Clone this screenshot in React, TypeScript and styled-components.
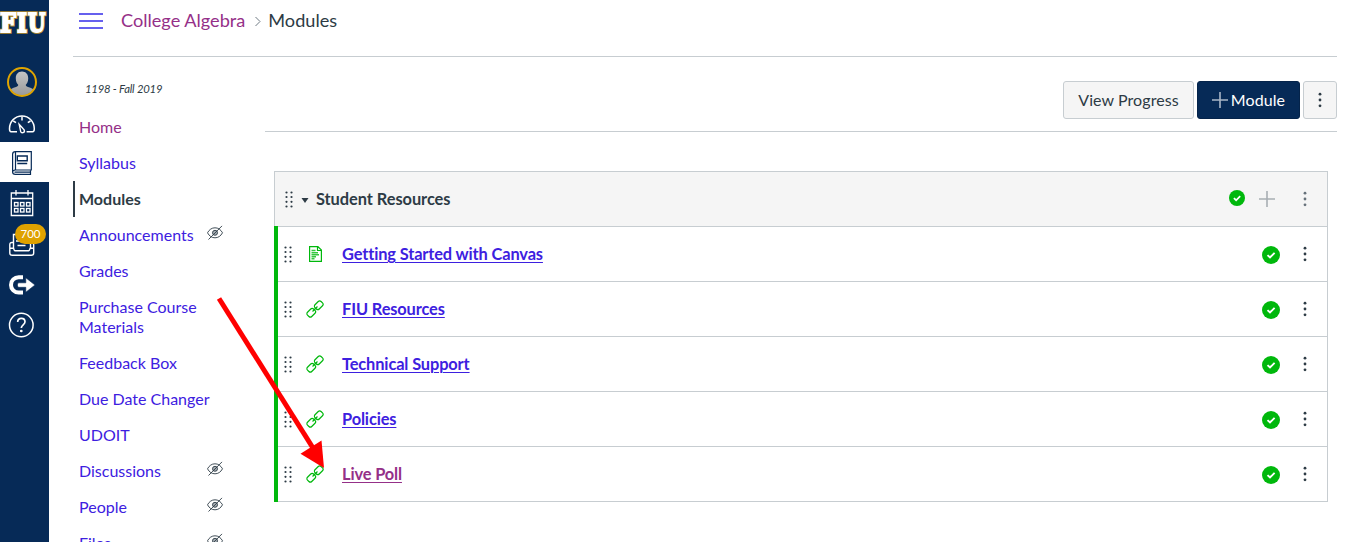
import React from "react";
import styled, { createGlobalStyle, css } from "styled-components";

const navy = "#062a57";
const ink = "#2d3b45";
const link = "#3d20df";
const visited = "#953088";
const line = "#c7cdd1";
const green = "#00b80c";

const Global = createGlobalStyle`
  * { box-sizing: border-box; }
  body { margin: 0; background: #fff; overflow: hidden; }
  svg { display: block; flex: none; }
`;

const Page = styled.div`
  position: relative;
  display: flex;
  width: 1353px;
  height: 542px;
  overflow: hidden;
  font-family: Lato, "Liberation Sans", sans-serif;
  font-size: 16px;
  line-height: 20px;
  color: ${ink};
`;

const Rail = styled.nav`
  flex: none;
  width: 49px;
  height: 542px;
  background: ${navy};
  overflow: hidden;
`;

const Brand = styled.div`
  height: 61px;
`;

const RailItem = styled.a<{ $h?: number; $active?: boolean; $drop?: number }>`
  position: relative;
  display: flex;
  align-items: center;
  padding-left: 7px;
  padding-top: ${(p) => p.$drop ?? 0}px;
  height: ${(p) => p.$h ?? 41}px;
  color: ${(p) => (p.$active ? navy : "#fff")};
  background: ${(p) => (p.$active ? "#fff" : "transparent")};
`;

const Badge = styled.span`
  position: absolute;
  left: 15px;
  top: 1px;
  width: 31px;
  height: 20px;
  border-radius: 10px;
  background: #dfa200;
  color: #fff;
  font-size: 11.5px;
  line-height: 20px;
  text-align: center;
`;

const Body = styled.div`
  flex: 1;
  padding: 0 16px 0 24px;
`;

const TopBar = styled.header`
  display: flex;
  align-items: center;
  height: 57px;
  padding: 0 0 15px 6px;
  border-bottom: 1px solid ${line};
`;

const Crumbs = styled.div`
  display: flex;
  align-items: center;
  margin: -2px 0 0 18px;
  font-size: 18.15px;
  line-height: 24px;
`;

const Crumb = styled.span<{ $link?: boolean }>`
  color: ${(p) => (p.$link ? visited : ink)};
`;

const Columns = styled.div`
  display: flex;
`;

const Side = styled.aside`
  flex: none;
  width: 192px;
  padding-top: 24px;
`;

const Term = styled.div`
  height: 28px;
  padding-left: 12px;
  font-size: 11.3px;
  letter-spacing: -0.2px;
  line-height: 16px;
  font-style: italic;
`;

const NavItem = styled.a<{ $tone?: "visited" | "active" }>`
  display: flex;
  justify-content: space-between;
  align-items: flex-start;
  width: 151px;
  padding: 8px 0 8px 6px;
  color: ${link};
  ${(p) => p.$tone === "visited" && css`color: ${visited};`}
  ${(p) => p.$tone === "active" && css`
    padding-left: 4px;
    border-left: 2px solid ${ink};
    color: ${ink};
    font-weight: 700;
  `}
`;

const NavLabel = styled.span`
  max-width: 134px;
`;

const Content = styled.main`
  flex: 1;
`;

const Actions = styled.div`
  display: flex;
  justify-content: flex-end;
  gap: 3px;
  height: 75px;
  padding-top: 24px;
  border-bottom: 1px solid ${line};
`;

const Button = styled.button<{ $primary?: boolean; $w: number }>`
  display: flex;
  align-items: center;
  justify-content: center;
  width: ${(p) => p.$w}px;
  height: 38px;
  padding: 0;
  gap: 3px;
  border: 1px solid ${(p) => (p.$primary ? "#05244b" : line)};
  border-radius: 3px;
  background: ${(p) => (p.$primary ? navy : "#f5f5f5")};
  color: ${(p) => (p.$primary ? "#fff" : ink)};
  font: inherit;
  letter-spacing: 0.08px;
`;

const Module = styled.section`
  margin: 39px 9px 0;
`;

const ModuleHead = styled.div`
  display: flex;
  align-items: center;
  height: 55px;
  padding-left: 10px;
  border: 1px solid ${line};
  border-bottom: 0;
  background: #f5f5f5;
`;

const ModuleTitle = styled.span`
  flex: 1;
  font-size: 16.4px;
  font-weight: 700;
  letter-spacing: -0.06px;
`;

const ItemList = styled.div`
  border-left: 4px solid ${green};
`;

const Row = styled.div`
  display: flex;
  align-items: center;
  height: 55px;
  padding-left: 6px;
  border-top: 1px solid ${line};
  border-right: 1px solid ${line};
  &:last-child {
    height: 56px;
    border-bottom: 1px solid ${line};
  }
`;

const RowIcon = styled.span`
  width: 18px;
  margin-left: 14px;
`;

const RowTitle = styled.span`
  flex: 1;
  margin-left: 18px;
`;

const RowLink = styled.a<{ $visited?: boolean }>`
  color: ${(p) => (p.$visited ? visited : link)};
  font-size: 16.4px;
  font-weight: 700;
  letter-spacing: -0.13px;
  text-decoration: underline;
  text-decoration-thickness: 1px;
  text-underline-offset: 2px;
`;

const Tools = styled.span`
  display: flex;
  align-items: center;
  gap: 17px;
  padding-right: 14px;
`;

const HeadTools = styled(Tools)`
  gap: 22px;
`;

const AddGroup = styled.span`
  display: flex;
  align-items: center;
  gap: 14px;
`;

const Raised = styled.span`
  padding-bottom: 3px;
`;

const Lowered = styled.span`
  padding-top: 2px;
`;

const Overlay = styled.svg`
  position: absolute;
  left: 0;
  top: 0;
  pointer-events: none;
`;

const Menu = () => (
  <svg width="24" height="18" viewBox="0 0 24 18" fill="#6660ee">
    <path d="M0 1h24v2H0zM0 8h24v2H0zM0 15h24v2H0z" />
  </svg>
);

const Grip = () => (
  <svg width="8" height="17" viewBox="0 0 8 17" fill={ink}>
    {[1.5, 6.5].map((x) =>
      [1.5, 6, 10.8, 15.5].map((y) => <circle key={`${x}-${y}`} cx={x} cy={y} r="1.1" />)
    )}
  </svg>
);

const Kebab = ({ color = ink }: { color?: string }) => (
  <svg width="16" height="16" viewBox="0 0 16 16" fill={color}>
    <circle cx="8" cy="2.2" r="1.4" />
    <circle cx="8" cy="8" r="1.4" />
    <circle cx="8" cy="13.8" r="1.4" />
  </svg>
);

const Plus = ({ color }: { color: string }) => (
  <svg width="16" height="16" viewBox="0 0 16 16" stroke={color} strokeWidth="1.6">
    <path d="M8 0v16M0 8h16" />
  </svg>
);

const Check = ({ size }: { size: number }) => (
  <svg width={size} height={size} viewBox="0 0 18 18">
    <circle cx="9" cy="9" r="9" fill={green} />
    <path d="M5.5 9.1l2.5 2.4 4.6-4.7" fill="none" stroke="#fff" strokeWidth="1.9" />
  </svg>
);

const Hidden = () => (
  <svg width="17" height="17" viewBox="0 0 17 17" fill="none" stroke={ink} strokeWidth=".9">
    <path d="M.5 7.800C2.300 4.500 4.800 2.800 8 2.800S13.700 4.500 15.500 7.800c-1.800 3.300-4.300 5-7.500 5S2.300 11.100.5 7.800z" />
    <circle cx="8" cy="7.800" r="2.500" fill="#a5acb1" />
    <path d="M1.500 14.500L15 .9" />
  </svg>
);

const Doc = () => (
  <svg width="18" height="18" viewBox="0 0 18 18" fill="none" stroke={green} strokeWidth="1.200">
    <path d="M3.600 1.600h8.300l3.500 3.500v11.300H3.600zM11.500 1.600v3.900h3.900" />
    <path d="M5.500 5.500h4M5.500 7.700h6.500M5.500 9.700h7.500M5.500 11.700h4.500M5.500 13.700h3" strokeWidth="1.400" opacity=".8" />
  </svg>
);

const Chain = () => (
  <svg width="18" height="18" viewBox="0 0 18 18" fill="none" stroke={green} strokeWidth="1.200">
    <g transform="rotate(-45 9 9)">
      <path d="M6 6H1.400A2 2 0 0 0-.6 8v2a2 2 0 0 0 2 2H6a2 2 0 0 0 2-2V8a2 2 0 0 0-2-2z" />
      <path d="M12 6h4.600a2 2 0 0 1 2 2v2a2 2 0 0 1-2 2H12a2 2 0 0 1-2-2V8a2 2 0 0 1 2-2z" />
      <path d="M5.500 9h7" />
    </g>
  </svg>
);

const logoLetters = [
  { ch: "F", x: 0, w: 16 },
  { ch: "I", x: 17, w: 10 },
  { ch: "U", x: 28, w: 17.5 },
];

const Logo = () => (
  <svg width="49" height="61" viewBox="0 0 49 61" fontFamily="'DejaVu Serif', serif" fontWeight="700" fontSize="26">
    {[{ c: "#b38b2d", s: 3.6 }, { c: "#fff", s: 1.8 }].map((layer) =>
      logoLetters.map((l) => (
        <text
          key={l.ch + layer.c}
          x={l.x}
          y="32"
          textLength={l.w}
          lengthAdjust="spacingAndGlyphs"
          fill={layer.c}
          stroke={layer.c}
          strokeWidth={layer.s}
          aria-hidden={layer.s > 2}
        >
          {l.ch}
        </text>
      ))
    )}
  </svg>
);

const Avatar = () => (
  <svg width="30" height="30" viewBox="0 0 30 30">
    <defs>
      <clipPath id="face"><circle cx="15" cy="15" r="13.500" /></clipPath>
      <linearGradient id="shade" x2="0" y2="1">
        <stop stopColor="#c4c4c4" />
        <stop offset="1" stopColor="#979797" />
      </linearGradient>
    </defs>
    <g clipPath="url(#face)" fill="url(#shade)">
      <path d="M15 4.500c4 0 6.400 3 6.200 7.200-.1 3-1.200 4.800-2.400 6.100-.1 1 .4 1.600 2.200 2.200 3.500 1 6 2 7 4.500V30H2v-5.500c1-2.500 3.500-3.500 7-4.500 1.800-.6 2.300-1.200 2.200-2.200-1.200-1.300-2.300-3.100-2.400-6.100C8.600 7.500 11 4.500 15 4.500z" />
    </g>
    <circle cx="15" cy="15" r="14" fill="none" stroke="#e0a500" strokeWidth="2" />
  </svg>
);

const Gauge = () => (
  <svg width="30" height="20" viewBox="0 0 30 20" fill="none" stroke="#fff" strokeWidth="1.500">
    <path d="M10 17.700H4.200c-1.300 0-1.700-1.200-1.700-3C2.500 7.500 8 2 15 2s12.300 5.500 12.300 12.700c0 1.800-.4 3-1.700 3h-6" />
    <path d="M15 2.500v4M6.300 7l2.700 1.700M23.500 7l-2.700 1.700" />
    <path d="M12.200 10.300l1.500 7.300c.6 1.900 4.200 1.200 3.700-1-.1-.7-.5-1.200-1-1.700z" strokeWidth="1.400" />
  </svg>
);

const Book = () => (
  <svg width="28" height="26" viewBox="0 0 28 26" fill="none" stroke={navy} strokeWidth="1.200">
    <path d="M8.500 1.700H24.300v18.300H8.300c-2 0-2.700 1-2.700 2.300V4.300c0-1.700 1-2.600 2.900-2.600z" />
    <path d="M5.600 22c0 1.700 1 2.400 2.700 2.400h15.200v-4.200M7.500 22.200h15.500M8.500 2v18" />
    <path d="M10.300 6h9.900v4.800h-9.900zM10.300 13.500h9.900" strokeWidth="1.400" />
  </svg>
);

const Calendar = () => (
  <svg width="28" height="28" viewBox="0 0 28 28" fill="none" stroke="#fff" strokeWidth="1.300">
    <path d="M4.300 4h21.400v22.500H4.300zM4.300 9.500h21.400M9 1v5.500M21 1v5.500" />
    {[7.5, 13.5, 19.5].map((x) =>
      [13.5, 19.5].map((y) => <rect key={`${x}-${y}`} x={x} y={y} width="3.500" height="3.500" />)
    )}
  </svg>
);

const Inbox = () => (
  <svg width="28" height="26" viewBox="0 0 28 26" fill="none" stroke="#fff" strokeWidth="1.400">
    <path d="M6.500 18V3.500h17V18M9 10h8M10.500 14.500h8" />
    <path d="M6.500 11.500H5c-1.500 0-2.200.8-2.200 2.200v8.300c0 1.500.8 2.300 2.300 2.300h19.300c1.500 0 2.300-.8 2.300-2.300v-8.300c0-1.400-.7-2.200-2.200-2.200h-1M2.800 17.200h3.400c.7 0 .7 2.600 1.700 2.600h13.800c1 0 1-2.600 1.700-2.600h3.300" />
  </svg>
);

const Share = () => (
  <svg width="29" height="22" viewBox="0 0 29 22">
    <path d="M16 3.200h-4.300a7.600 7.600 0 0 0 0 15.400H16" fill="none" stroke="#fff" strokeWidth="4" />
    <path d="M11.500 8.800h7.300V3.800l9.200 7.200-9.200 7.200v-4.900h-7.300c-1.500-1.200-1.500-3.300 0-4.500z" fill="#fff" stroke={navy} strokeWidth=".6" />
  </svg>
);

const Help = () => (
  <svg width="28" height="28" viewBox="0 0 28 28" fill="none" stroke="#fff" strokeWidth="1.500">
    <circle cx="14.300" cy="14" r="11.800" />
    <path d="M10.700 11c0-2.200 1.500-3.700 3.700-3.700S18 8.700 18 10.700c0 3-3.700 3.200-3.700 6.300" strokeWidth="1.700" />
    <circle cx="14.300" cy="20" r=".6" fill="#fff" />
  </svg>
);

type Entry = { label: string; tone?: "visited" | "active"; hidden?: boolean };

const nav: Entry[] = [
  { label: "Home", tone: "visited" },
  { label: "Syllabus" },
  { label: "Modules", tone: "active" },
  { label: "Announcements", hidden: true },
  { label: "Grades" },
  { label: "Purchase Course Materials" },
  { label: "Feedback Box" },
  { label: "Due Date Changer" },
  { label: "UDOIT" },
  { label: "Discussions", hidden: true },
  { label: "People", hidden: true },
  { label: "Files", hidden: true },
];

const items = ["Getting Started with Canvas", "FIU Resources", "Technical Support", "Policies", "Live Poll"];

export default function App() {
  return (
    <Page>
      <Global />
      <Rail>
        <Brand><Logo /></Brand>
        <RailItem $h={42}><Avatar /></RailItem>
        <RailItem $h={39} $drop={3}><Gauge /></RailItem>
        <RailItem $h={40} $drop={2} $active><Book /></RailItem>
        <RailItem $h={41}><Calendar /></RailItem>
        <RailItem $h={41}><Inbox /><Badge>700</Badge></RailItem>
        <RailItem $h={41}><Share /></RailItem>
        <RailItem $h={40}><Help /></RailItem>
      </Rail>
      <Body>
        <TopBar>
          <Menu />
          <Crumbs>
            <Crumb $link>College Algebra</Crumb>
            <svg width="23" height="14" viewBox="0 0 23 14" fill="none" stroke="#6f7b84">
              <path d="M10.500 4l4.500 4.500-4.500 4.500" />
            </svg>
            <Crumb>Modules</Crumb>
          </Crumbs>
        </TopBar>
        <Columns>
          <Side>
            <Term>1198 - Fall 2019</Term>
            {nav.map((n) => (
              <NavItem key={n.label} $tone={n.tone}>
                <NavLabel>{n.label}</NavLabel>
                {n.hidden && <Hidden />}
              </NavItem>
            ))}
          </Side>
          <Content>
            <Actions>
              <Button $w={131}>View Progress</Button>
              <Button $w={103} $primary><Plus color="#a9b6c7" />Module</Button>
              <Button $w={34}><Kebab /></Button>
            </Actions>
            <Module>
              <ModuleHead>
                <Grip />
                <svg width="23" height="8" viewBox="0 0 23 8">
                  <path d="M8.500 3h7L12 8z" fill={ink} />
                </svg>
                <ModuleTitle>Student Resources</ModuleTitle>
                <HeadTools>
                  <AddGroup>
                    <Raised><Check size={16} /></Raised>
                    <Plus color="#a8aeb3" />
                  </AddGroup>
                  <Kebab color="#66717a" />
                </HeadTools>
              </ModuleHead>
              <ItemList>
                {items.map((t, i) => (
                  <Row key={t}>
                    <Grip />
                    <RowIcon>{i === 0 ? <Doc /> : <Chain />}</RowIcon>
                    <RowTitle><RowLink $visited={t === "Live Poll"}>{t}</RowLink></RowTitle>
                    <Tools>
                      <Lowered><Check size={18} /></Lowered>
                      <Kebab />
                    </Tools>
                  </Row>
                ))}
              </ItemList>
            </Module>
          </Content>
        </Columns>
      </Body>
      <Overlay width="1353" height="542" viewBox="0 0 1353 542">
        <path d="M219 298.500L313 448" stroke="#f00" strokeWidth="5" />
        <path d="M321.500 440.500L300.500 453.700L324 468z" fill="#f00" />
      </Overlay>
    </Page>
  );
}
